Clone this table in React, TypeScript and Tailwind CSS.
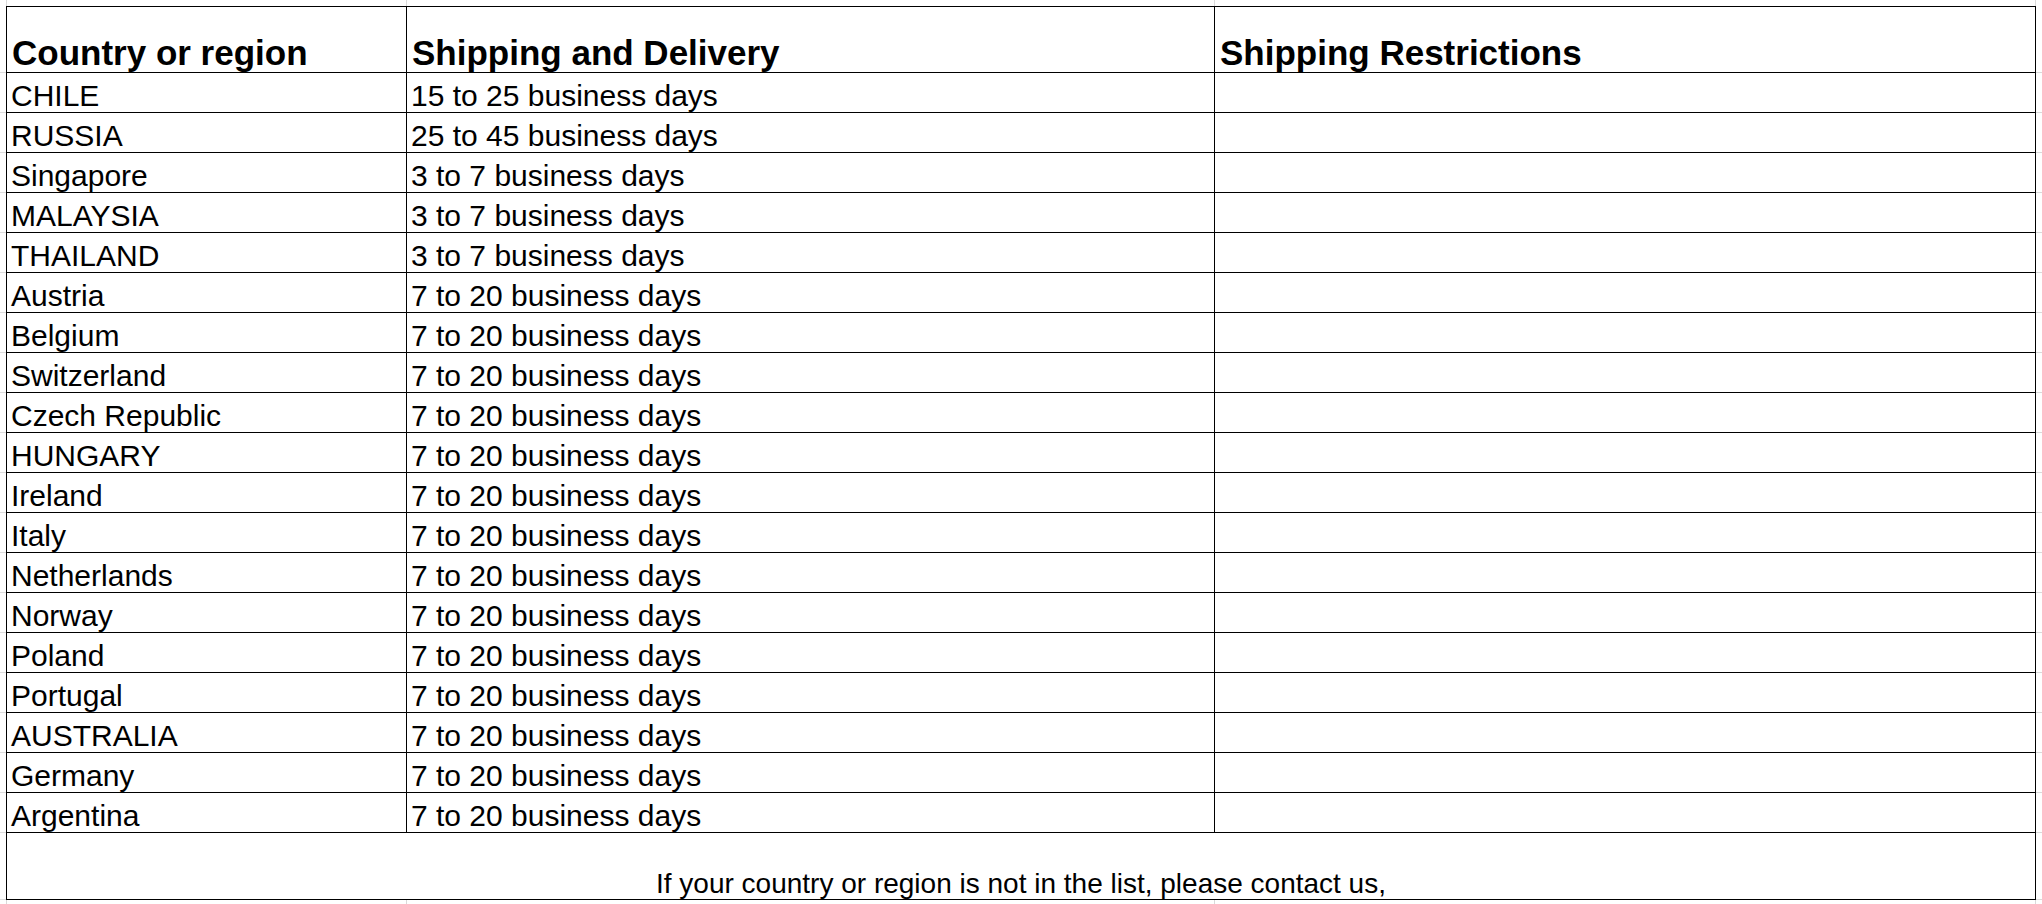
const rows: [string, string][] = [
  ["CHILE", "15 to 25 business days"],
  ["RUSSIA", "25 to 45 business days"],
  ["Singapore", "3 to 7 business days"],
  ["MALAYSIA", "3 to 7 business days"],
  ["THAILAND", "3 to 7 business days"],
  ["Austria", "7 to 20 business days"],
  ["Belgium", "7 to 20 business days"],
  ["Switzerland", "7 to 20 business days"],
  ["Czech Republic", "7 to 20 business days"],
  ["HUNGARY", "7 to 20 business days"],
  ["Ireland", "7 to 20 business days"],
  ["Italy", "7 to 20 business days"],
  ["Netherlands", "7 to 20 business days"],
  ["Norway", "7 to 20 business days"],
  ["Poland", "7 to 20 business days"],
  ["Portugal", "7 to 20 business days"],
  ["AUSTRALIA", "7 to 20 business days"],
  ["Germany", "7 to 20 business days"],
  ["Argentina", "7 to 20 business days"],
];

// ----------------------------------------------------------------------------

const Strip = ({ h }: { h: string }) => {
  return (
    <div className={`flex ${h}`}>
      <div className="w-[7px] border-r border-[#dadada]" />
      <div className="w-[400px] border-r border-[#dadada]" />
      <div className="w-[808px] border-r border-[#dadada]" />
      <div className="w-[821px] border-r border-[#dadada]" />
    </div>
  );
};

const Gutter = () => {
  return (
    <div className="flex flex-col w-[6px]">
      <div className="h-[67px] border-b border-[#dadada]" />
      {rows.map((r) => (
        <div key={r[0]} className="h-[40px] border-b border-[#dadada]" />
      ))}
      <div className="h-[67px] border-b border-[#dadada]" />
    </div>
  );
};

const Head = ({ text }: { text: string }) => {
  return (
    <div className="h-[66px] flex items-end pl-[5px] border-r border-b border-black">
      <span className="text-[35px] font-bold leading-[1.117] whitespace-nowrap">
        {text}
      </span>
    </div>
  );
};

const Cell = ({ text }: { text: string }) => {
  return (
    <div className="h-[40px] flex items-end pl-[4px] border-r border-b border-black">
      <span className="text-[30px] leading-[1.117] whitespace-nowrap">
        {text}
      </span>
    </div>
  );
};

export default function App() {
  return (
    <div className="w-[2042px] h-[904px] overflow-hidden bg-white text-black font-['Liberation_Sans',Arial,sans-serif]">
      <Strip h="h-[6px]" />
      <div className="flex">
        <Gutter />
        <div className="border-l border-t border-black">
          <div className="grid grid-cols-[400px_808px_821px]">
            <Head text="Country or region" />
            <Head text="Shipping and Delivery" />
            <Head text="Shipping Restrictions" />
            {rows.map(([country, days]) => (
              <div key={country} className="contents">
                <Cell text={country} />
                <Cell text={days} />
                <Cell text="" />
              </div>
            ))}
          </div>
          <div className="h-[67px] flex items-end justify-center border-r border-b border-black">
            <span className="text-[28px] leading-[1.117] whitespace-nowrap">
              If your country or region is not in the list, please contact us,
            </span>
          </div>
        </div>
        <Gutter />
      </div>
      <Strip h="h-[6px]" />
    </div>
  );
}
